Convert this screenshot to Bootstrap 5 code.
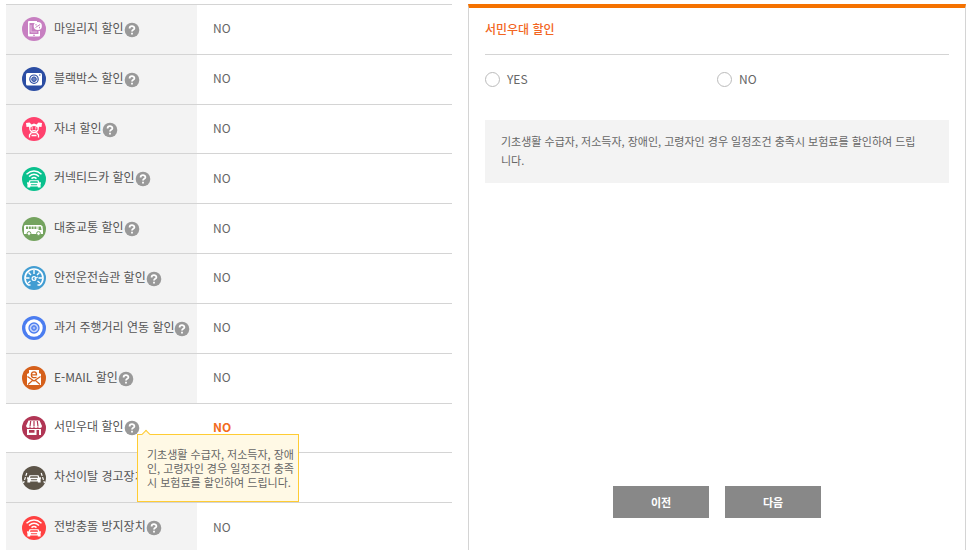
<!DOCTYPE html>
<html lang="ko">
<head>
<meta charset="utf-8">
<meta name="viewport" content="width=device-width, initial-scale=1">
<title>할인 특약</title>
<link href="https://cdn.jsdelivr.net/npm/bootstrap@5.3.0/dist/css/bootstrap.min.css" rel="stylesheet">
<style>
body{font-family:"Noto Sans CJK KR",sans-serif;font-size:12px;line-height:20px;color:#666;background:#fff}
.page-area{display:grid;grid-template-columns:446fr 498fr;gap:16px;height:100vh;padding:4px 5px 7px 6px;overflow:hidden}
.list-side{overflow:hidden}
.discounts{width:100%;height:548px;border-collapse:separate;border-spacing:0}
.discounts th,.discounts td{border-top:1px solid #d4d4d4;font-weight:400;vertical-align:middle;height:49px}
.discounts td{padding:0 16px 2px}
.discounts th{width:191px;padding:0 0 0 16px;background:#f3f3f3;color:#555;white-space:nowrap}
.discounts .current th{background:#fff}
.discounts .current td{color:#f26b1d;font-weight:700}
.item-icon{width:24px;height:24px;flex:none;margin-right:8px}
.item-name{padding-bottom:3px}
.help-btn{width:16px;height:16px;flex:none;padding:0;border:0;background:none;display:flex;margin-top:1px}
.help-btn svg{width:16px;height:16px}
.hint{position:absolute;left:115px;top:18px;width:162px;padding:12px 4px 12px 9px;border:1px solid #fc3;background:#fff9e5;color:#666;font-size:11px;line-height:14px;white-space:normal;word-break:break-all;z-index:2}
.hint::before{content:"";position:absolute;left:5px;top:-4px;width:6px;height:6px;border:solid #fc3;border-width:1px 0 0 1px;background:#fff9e5;transform:rotate(45deg)}
.detail{border:1px solid #d4d4d4;border-top:4px solid #f57200;border-bottom:0;padding:0 16px 32px}
.detail h2{font-size:12px;line-height:20px;font-weight:500;color:#f26522;padding:11px 0 15px;border-bottom:1px solid #d4d4d4}
.choices{padding-top:14px}
.choice{min-height:20px;padding:0;margin:0}
.choice .form-check-input{width:15px;height:15px;margin:0 7px 0 0;float:none;border:1px solid #bbb}
.choice label{padding-bottom:1px}
.note-box{margin-top:30px;padding:12px 24px 13px 16px;background:#f3f3f3;font-size:11px;line-height:19px;word-break:break-all}
.step-btn{width:96px;height:32px;padding:0;border:0;border-radius:0;background:#888;color:#fff;font-size:11px;font-weight:700}
</style>
</head>
<body>
<svg class="d-none" aria-hidden="true">
<symbol id="help" viewBox="0 0 16 16"><circle cx="8" cy="8" r="7.3" fill="#999"/><path d="M5.6 6.4C5.6 3.4 10.4 3.5 10.4 6.2C10.4 7.9 8 7.7 8 9.5M8 10.8v1.7" fill="none" stroke="#fff" stroke-width="1.8"/></symbol>
<symbol id="carfront" viewBox="0 0 24 24"><path fill="currentColor" fill-rule="evenodd" d="M7.500 13.300h9l1 2.200 1.500-.3v1.300l-.4.4v3.600h-2.800v-1H8.200v1H5.400v-3.600L5 16.500v-1.300l1.500.3zM8.500 14.300l-.6 1.500h8.200l-.6-1.500zM8.700 17.300l.5 1h5.600l.5-1z"/></symbol>
<symbol id="waves" viewBox="0 0 24 24"><path d="M4.500 7.300Q12 .8 19.500 7.300M7 9.500Q12 5 17 9.500M9.500 11.600Q12 9.300 14.500 11.600" fill="none" stroke="currentColor" stroke-width="1.500"/></symbol>
</svg>
<main class="page-area">
<section class="list-side" aria-label="할인 목록">
<table class="discounts">
<tbody>
<tr><th scope="row"><div class="d-flex align-items-center"><svg class="item-icon" viewBox="0 0 24 24"><circle cx="12" cy="12" r="12" fill="#c77fc1"/><path fill="#fff" fill-rule="evenodd" d="M7 4h8v2H7.500v11h9v-3H18v4.500q0 1-1 1H7q-1 0-1-1V5q0-1 1-1zM11 17.700v1h2v-1z"/><circle cx="15.800" cy="9" r="4.100" fill="#fff"/><path d="M13.500 10.500l4.600-3M14 7v1.500M17.500 9.800v1.500" stroke="#c77fc1"/><path d="M9 8v7h6" stroke="#e4bfe1" fill="none"/></svg><span class="item-name">마일리지 할인</span><button class="help-btn" type="button" aria-label="마일리지 할인 도움말"><svg><use href="#help"/></svg></button></div></th><td>NO</td></tr>
<tr><th scope="row"><div class="d-flex align-items-center"><svg class="item-icon" viewBox="0 0 24 24"><circle cx="12" cy="12" r="12" fill="#2b4da3"/><rect x="4" y="6" width="16" height="12.500" rx="1.500" fill="#fff"/><circle cx="12" cy="12.200" r="4.200" fill="none" stroke="#2b4da3" stroke-width="1.200"/><circle cx="12" cy="12.200" r="2.300" fill="#6b83c1" stroke="#2b4da3"/><path d="M17 8h1.500" stroke="#2b4da3"/></svg><span class="item-name">블랙박스 할인</span><button class="help-btn" type="button" aria-label="블랙박스 할인 도움말"><svg><use href="#help"/></svg></button></div></th><td>NO</td></tr>
<tr><th scope="row"><div class="d-flex align-items-center"><svg class="item-icon" viewBox="0 0 24 24"><circle cx="12" cy="12" r="12" fill="#ff416d"/><path fill="#fff" d="M4 6l3.500-.5 2 2L12 6.500l2.500 1 2-2L20 6l-.5 4-2.500-.3-.5 3.500-2.500 3h-4l-2.500-3L7 9.700 4.500 10z"/><path d="M8.500 10.500Q12 7.500 15.500 10.500v2Q12 17 8.500 12.500z" fill="#ff416d"/><path d="M9.500 11h1.500M13 11h1.500M10 13q2 1.600 4 0" stroke="#fff" fill="none"/><path d="M9.500 15.500L7.500 18v2.500M14.500 15.500l2 2.500v2.500M9.500 18.500h5" stroke="#fff" fill="none" stroke-width="1.300"/></svg><span class="item-name">자녀 할인</span><button class="help-btn" type="button" aria-label="자녀 할인 도움말"><svg><use href="#help"/></svg></button></div></th><td>NO</td></tr>
<tr><th scope="row"><div class="d-flex align-items-center"><svg class="item-icon text-white" viewBox="0 0 24 24"><circle cx="12" cy="12" r="12" fill="#09c08d"/><use href="#waves"/><use href="#carfront"/></svg><span class="item-name">커넥티드카 할인</span><button class="help-btn" type="button" aria-label="커넥티드카 할인 도움말"><svg><use href="#help"/></svg></button></div></th><td>NO</td></tr>
<tr><th scope="row"><div class="d-flex align-items-center"><svg class="item-icon" viewBox="0 0 24 24"><circle cx="12" cy="12" r="12" fill="#74a35f"/><path fill="#fff" d="M3 8h16l1.500 1.500.5 4v3.500H2V9z"/><path d="M4 10.700h11.500" stroke="#74a35f" stroke-width="2.400" stroke-dasharray="2 .8"/><path fill="#74a35f" d="M16.500 9.500h2.300l.7 3.500h-3z"/><g fill="#fff" stroke="#74a35f"><circle cx="7" cy="16.500" r="1.900"/><circle cx="16.500" cy="16.500" r="1.900"/></g></svg><span class="item-name">대중교통 할인</span><button class="help-btn" type="button" aria-label="대중교통 할인 도움말"><svg><use href="#help"/></svg></button></div></th><td>NO</td></tr>
<tr><th scope="row"><div class="d-flex align-items-center"><svg class="item-icon" viewBox="0 0 24 24"><circle cx="12" cy="12" r="12" fill="#429dd2"/><path d="M8.500 19H6.300A9 9 0 1 1 17.700 19H15.500" fill="none" stroke="#fff" stroke-width="1.600"/><path d="M12 4v4M6.500 6.500L9 9M17.500 6.500L15 9M4 12h3.500M16.500 12H20M6 17l2.500-2M18 17l-2.500-2" stroke="#fff" stroke-width="1.400"/><circle cx="12" cy="12.500" r="1.900" fill="none" stroke="#fff" stroke-width="1.200"/><path d="M12.500 12.500L16 11" stroke="#fff"/></svg><span class="item-name">안전운전습관 할인</span><button class="help-btn" type="button" aria-label="안전운전습관 할인 도움말"><svg><use href="#help"/></svg></button></div></th><td>NO</td></tr>
<tr><th scope="row"><div class="d-flex align-items-center"><svg class="item-icon" viewBox="0 0 24 24"><circle cx="12" cy="12" r="12" fill="#4b7df0"/><circle cx="12" cy="12" r="8.700" fill="#fff"/><circle cx="12" cy="12" r="5" fill="#c5d5fb" stroke="#4b7df0" stroke-width="1.300"/><circle cx="12" cy="12" r="2.300" fill="#7197f3" stroke="#4b7df0"/><circle cx="12" cy="12" r=".7" fill="#fff"/></svg><span class="item-name">과거 주행거리 연동 할인</span><button class="help-btn" type="button" aria-label="과거 주행거리 연동 할인 도움말"><svg><use href="#help"/></svg></button></div></th><td>NO</td></tr>
<tr><th scope="row"><div class="d-flex align-items-center"><svg class="item-icon" viewBox="0 0 24 24"><circle cx="12" cy="12" r="12" fill="#d5601b"/><path fill="#fff" d="M5 8l2-1V4h10v3l2 1v11H5z"/><path d="M14.500 11.300Q9.300 12.800 9.300 8.700Q9.600 5.700 12.200 5.800Q14.700 6 14.500 8.900H10" fill="none" stroke="#d5601b" stroke-width="1.300"/><path d="M5.500 10.500L12 15l6.500-4.500M6 18.500l4.500-4M18 18.500l-4.500-4" fill="none" stroke="#d5601b" stroke-width="1.200"/></svg><span class="item-name">E-MAIL 할인</span><button class="help-btn" type="button" aria-label="E-MAIL 할인 도움말"><svg><use href="#help"/></svg></button></div></th><td>NO</td></tr>
<tr class="current"><th scope="row"><div class="d-flex align-items-center position-relative"><svg class="item-icon" viewBox="0 0 24 24"><circle cx="12" cy="12" r="12" fill="#b13655"/><path fill="#fff" d="M6.500 4.500h11L20 10q0 2-2 2t-2-1q-.8 1-2 1t-2-1q-.8 1-2 1t-2-1q-.8 1-2 1t-2-2z"/><path d="M8.700 5L8 10.500M12 5v5.500M15.300 5l.7 5.500" stroke="#b13655" stroke-width="1.200"/><path fill="#fff" fill-rule="evenodd" d="M5 13h14v6H5zM7 14v2.700h5.500V14zM14.500 14v5h2.500v-5z"/></svg><span class="item-name">서민우대 할인</span><button class="help-btn" type="button" aria-label="서민우대 할인 도움말" aria-describedby="hint"><svg><use href="#help"/></svg></button><div class="hint" id="hint" role="tooltip">기초생활 수급자, 저소득자, 장애인, 고령자인 경우 일정조건 충족시 보험료를 할인하여 드립니다.</div></div></th><td>NO</td></tr>
<tr><th scope="row"><div class="d-flex align-items-center"><svg class="item-icon text-white" viewBox="0 0 24 24"><circle cx="12" cy="12" r="12" fill="#5c5448"/><use href="#carfront" y="-4"/><path d="M4.800 7L1.500 17M19.200 7l3.300 10" stroke="#fff" stroke-width="1.200" stroke-dasharray="3 1.300"/></svg><span class="item-name">차선이탈 경고장치</span><button class="help-btn" type="button" aria-label="차선이탈 경고장치 도움말"><svg><use href="#help"/></svg></button></div></th><td></td></tr>
<tr><th scope="row"><div class="d-flex align-items-center"><svg class="item-icon text-white" viewBox="0 0 24 24"><circle cx="12" cy="12" r="12" fill="#ff4141"/><use href="#waves"/><use href="#carfront"/></svg><span class="item-name">전방충돌 방지장치</span><button class="help-btn" type="button" aria-label="전방충돌 방지장치 도움말"><svg><use href="#help"/></svg></button></div></th><td>NO</td></tr>
</tbody>
</table>
</section>
<section class="detail d-flex flex-column">
<h2 class="mb-0">서민우대 할인</h2>
<div class="row g-0 choices" role="radiogroup" aria-label="서민우대 할인">
<div class="col-6"><div class="choice form-check d-flex align-items-center"><input class="form-check-input" type="radio" name="benefit" id="yes"><label for="yes">YES</label></div></div>
<div class="col-6"><div class="choice form-check d-flex align-items-center"><input class="form-check-input" type="radio" name="benefit" id="no"><label for="no">NO</label></div></div>
</div>
<p class="note-box mb-0">기초생활 수급자, 저소득자, 장애인, 고령자인 경우 일정조건 충족시 보험료를 할인하여 드립니다.</p>
<div class="d-flex justify-content-center gap-3 mt-auto">
<button class="btn step-btn" type="button">이전</button>
<button class="btn step-btn" type="button">다음</button>
</div>
</section>
</main>
<script src="https://cdn.jsdelivr.net/npm/bootstrap@5.3.0/dist/js/bootstrap.bundle.min.js"></script>
</body>
</html>
